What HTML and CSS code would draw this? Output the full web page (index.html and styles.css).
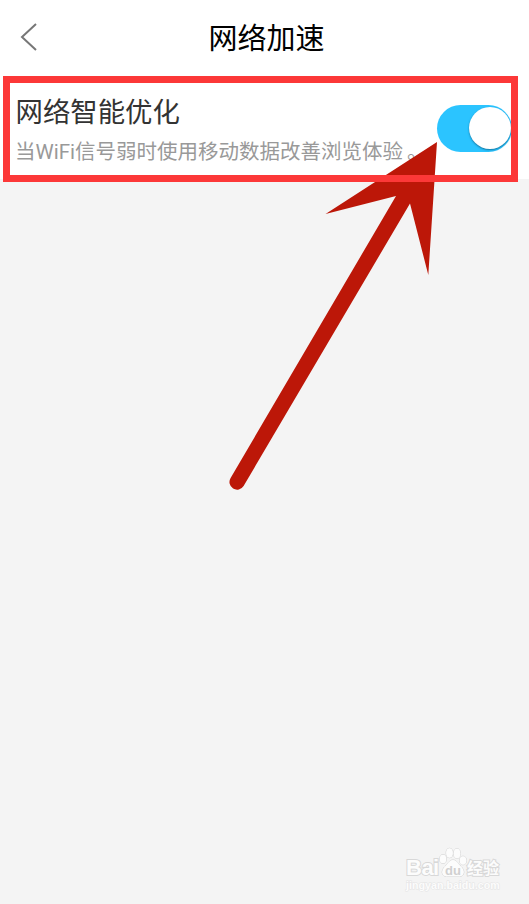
FILE: index.html
```html
<!DOCTYPE html>
<html lang="zh-CN">
<head>
<meta charset="utf-8">
<title>网络加速</title>
<link rel="stylesheet" href="styles.css">
</head>
<body>
<header class="bar">
  <svg class="back" width="18" height="30" viewBox="0 0 18 30"><path d="M16 2 2 15 16 28"/></svg>
  <h1 class="title">网络加速</h1>
</header>
<main class="row">
  <div class="text">
    <div class="name">网络智能优化</div>
    <div class="desc">当WiFi信号弱时使用移动数据改善浏览体验<span class="stop">。</span></div>
  </div>
  <div class="toggle"><div class="knob"></div></div>
</main>
<svg class="arrow" width="529" height="904" viewBox="0 0 529 904"><path d="M437 142 325.500 214 396 196 230.600 478A7.400 7.400 0 0 0 243.600 486L410 203.500 428.300 275Z"/></svg>
<div class="frame"></div>
<footer class="mark">
  <div class="brand">
    <span class="latin">Bai</span>
    <svg class="paw" width="28" height="31" viewBox="0 0 28 31">
      <ellipse cx="4" cy="12" rx="3.300" ry="4.300"/><ellipse cx="10.500" cy="6" rx="3.400" ry="4.700"/><ellipse cx="18" cy="6.500" rx="3.400" ry="4.700"/><ellipse cx="24" cy="13.500" rx="3.300" ry="4.300"/>
      <path d="M14 13c-4 0-5 4-8 6.500-4 3.500-4 9.500 1.500 10h13c5.500-.5 5.500-6.500 1.500-10-3-2.500-4-6.500-8-6.500Z"/>
      <text x="14" y="28" text-anchor="middle">du</text>
    </svg>
    <span class="han">经验</span>
  </div>
  <div class="site">jingyan.baidu.com</div>
</footer>
</body>
</html>
```
FILE: styles.css
```css
* { box-sizing: border-box; }
body {
  margin: 0;
  height: 904px;
  position: relative;
  overflow: hidden;
  background: #f4f4f4;
  font-family: Roboto, "Noto Sans CJK SC", sans-serif;
}
.bar {
  height: 76px;
  background: #fff;
  display: grid;
  grid-template-columns: 60px 1fr 56px;
  align-items: center;
}
.back { margin: -3px 0 0 20px; fill: none; stroke: #777; stroke-width: 2; }
.title {
  margin: 0;
  padding-top: 1px;
  font-size: 29px;
  line-height: 40px;
  font-weight: 400;
  text-align: center;
  color: #000;
}
.row {
  height: 103px;
  padding: 0 17px 0 15px;
  background: #fff;
  display: flex;
  justify-content: space-between;
}
.text { padding-top: 17px; white-space: nowrap; width: 420px; }
.name { font-size: 27.400px; line-height: 40px; color: #333; padding-left: 0.500px; }
.desc { font-size: 20.500px; line-height: 30px; margin-top: 4px; color: #999; }
.stop { margin-left: 4px; }
.toggle {
  flex: none;
  width: 75px;
  height: 47px;
  margin-top: 29px;
  padding: 2px 1px;
  border-radius: 24px;
  background: #2bc4ff;
  display: flex;
  justify-content: flex-end;
}
.knob {
  width: 42px;
  height: 42px;
  border-radius: 50%;
  background: #fff;
  box-shadow: 0 1px 2px #1475a0;
}
.arrow { position: absolute; left: 0; top: 0; fill: #bc1708; }
.frame {
  position: absolute;
  left: 3px;
  top: 76px;
  width: 515px;
  height: 106px;
  border: 7px solid #fc3838;
}
.mark {
  position: absolute;
  left: 406px;
  top: 846px;
  color: #fcfcfc;
  -webkit-text-stroke: 2px #d8d8d8;
  paint-order: stroke fill;
}
.brand { height: 32px; display: flex; align-items: flex-end; }
.latin { font: 700 22px/20px "Liberation Sans", sans-serif; width: 33px; letter-spacing: -.5px; }
.paw { fill: #fcfcfc; stroke: #d2d2d2; stroke-width: 1; }
.paw text { font: 700 13px "Liberation Sans", sans-serif; fill: #d0d0d0; stroke: none; -webkit-text-stroke: 0; }
.han { font-size: 16px; font-weight: 700; line-height: 18px; }
.site { font: 700 10.700px/14px "Liberation Sans", sans-serif; -webkit-text-stroke: 1px #e4e4e4; }
```
